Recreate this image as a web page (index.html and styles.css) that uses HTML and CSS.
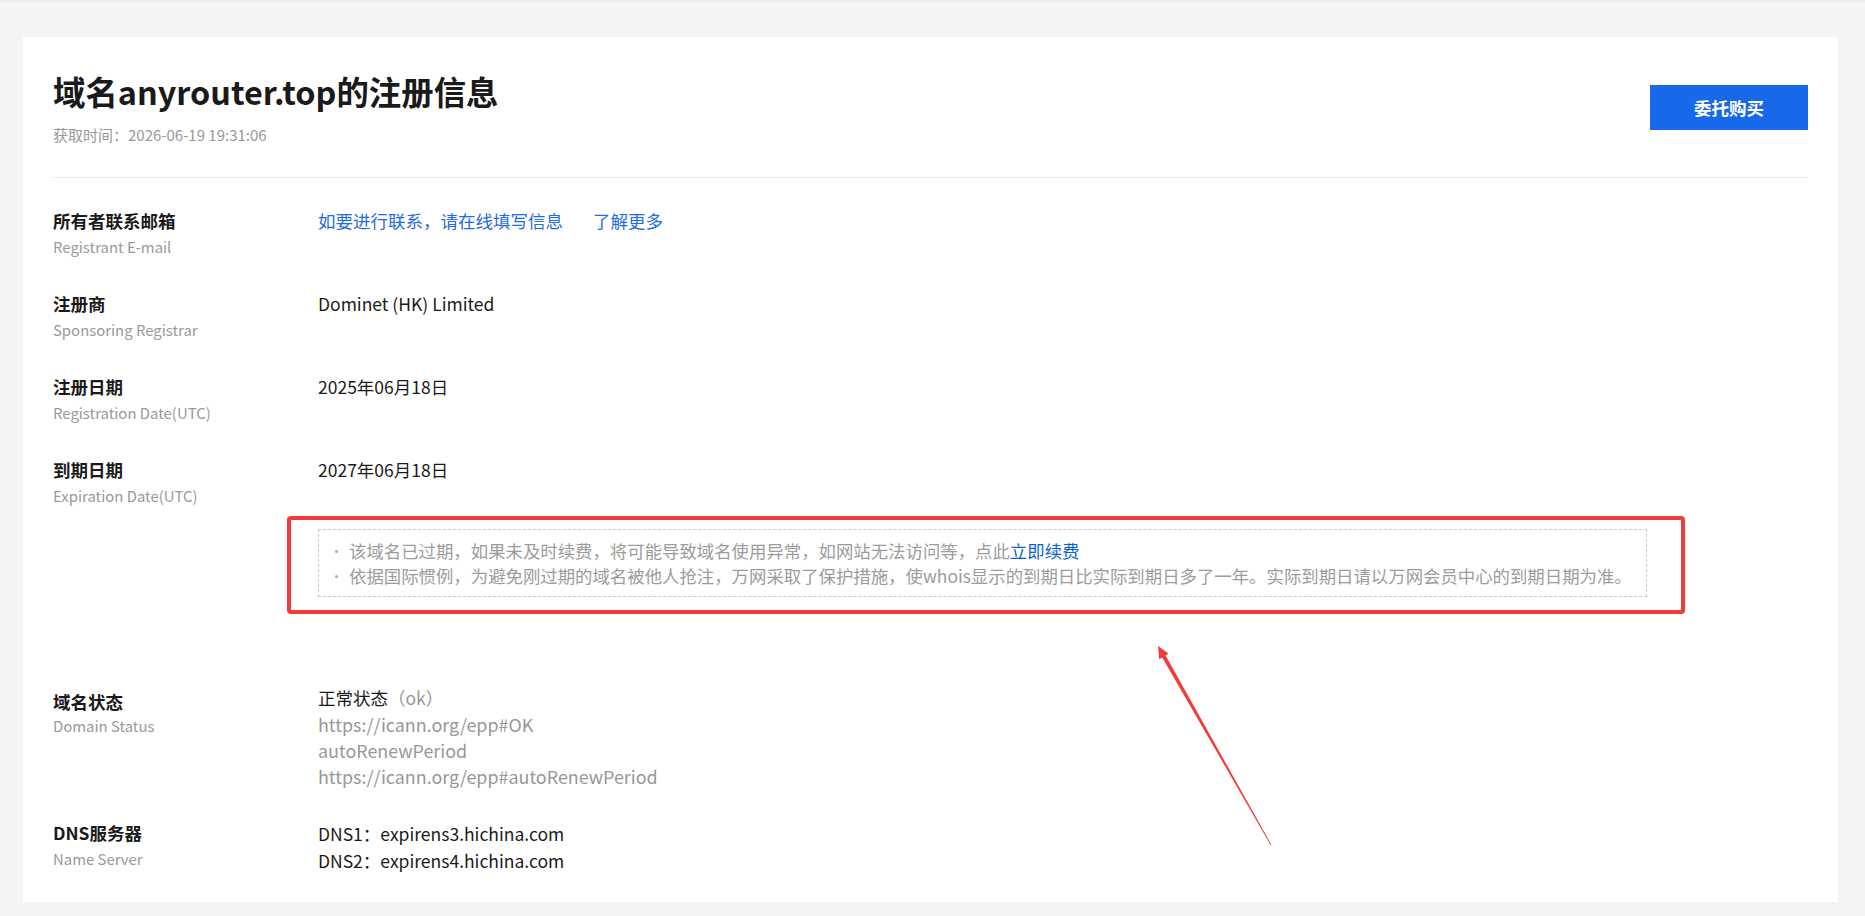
FILE: index.html
```html
<!DOCTYPE html>
<html lang="zh-CN">
<head>
  <meta charset="UTF-8">
  <meta name="viewport" content="width=device-width, initial-scale=1.0">
  <title>域名anyrouter.top的注册信息</title>
  <link rel="stylesheet" href="styles.css">
</head>
<body>
  <div class="whois-card">
    <!-- Header: title + fetch time + buy button -->
    <div class="whois-head">
      <div>
        <h1 class="whois-title">域名anyrouter.top的注册信息</h1>
        <p class="whois-time">获取时间：2026-06-19 19:31:06</p>
      </div>
      <a class="buy-button" href="#">委托购买</a>
    </div>

    <ul class="info-list">
      <li class="info-row">
        <div class="info-label"><strong>所有者联系邮箱</strong><span>Registrant E-mail</span></div>
        <div class="info-value">
          <a class="info-link" href="#">如要进行联系，请在线填写信息</a><a class="info-link more-link" href="#">了解更多</a>
        </div>
      </li>
      <li class="info-row">
        <div class="info-label"><strong>注册商</strong><span>Sponsoring Registrar</span></div>
        <div class="info-value">Dominet (HK) Limited</div>
      </li>
      <li class="info-row">
        <div class="info-label"><strong>注册日期</strong><span>Registration Date(UTC)</span></div>
        <div class="info-value">2025年06月18日</div>
      </li>
      <li class="info-row">
        <div class="info-label"><strong>到期日期</strong><span>Expiration Date(UTC)</span></div>
        <div class="info-value">
          <div>2027年06月18日</div>
          <div class="expire-tip">
            <ul class="tip-list">
              <li>该域名已过期，如果未及时续费，将可能导致域名使用异常，如网站无法访问等，点此<a class="renew-link" href="#">立即续费</a></li>
              <li>依据国际惯例，为避免刚过期的域名被他人抢注，万网采取了保护措施，使whois显示的到期日比实际到期日多了一年。实际到期日请以万网会员中心的到期日期为准。</li>
            </ul>
            <div class="mark-box"></div>
          </div>
        </div>
      </li>
      <li class="info-row status-row">
        <div class="info-label"><strong>域名状态</strong><span>Domain Status</span></div>
        <div class="info-value">
          <div>正常状态<span class="muted">（ok）</span></div>
          <div class="muted status-code">https://icann.org/epp#OK</div>
          <div class="muted status-code">autoRenewPeriod</div>
          <div class="muted status-code">https://icann.org/epp#autoRenewPeriod</div>
        </div>
      </li>
      <li class="info-row dns-row">
        <div class="info-label"><strong>DNS服务器</strong><span>Name Server</span></div>
        <div class="info-value">
          <div>DNS1：expirens3.hichina.com</div>
          <div>DNS2：expirens4.hichina.com</div>
        </div>
      </li>
    </ul>

    <!-- Red annotation arrow -->
    <svg class="mark-arrow" width="140" height="215" viewBox="0 0 140 215">
      <polygon points="15,9 25.5,16.5 22.6,18.4 128.4,207.8 127.7,208.2 19.2,20.4 16.2,22.2" fill="#f23b3b"/>
    </svg>
  </div>
</body>
</html>
```

FILE: styles.css
```css
/* General styles */
* {
  box-sizing: border-box;
}

body {
  margin: 0;
  padding: 37px 27px 16px 23px;
  background: linear-gradient(180deg, #ededef 0, #f8f8f9 5px, #f4f4f4 11px) no-repeat;
  background-color: #f4f4f4;
  font-family: "Noto Sans CJK SC", "Source Han Sans SC", sans-serif;
  color: #1a1a1a;
}

.whois-card {
  position: relative;
  background: #fff;
  padding: 0 30px 28px;
}

/* Header */
.whois-head {
  display: flex;
  justify-content: space-between;
  align-items: flex-start;
  padding: 34px 0 31px;
  border-bottom: 1px solid #e8e8e8;
}

.whois-title {
  margin: 0;
  font-size: 32.4px;
  line-height: 40px;
  font-weight: 700;
  color: #1a1a1a;
}

.whois-time {
  margin: 13px 0 0;
  font-size: 15px;
  line-height: 22px;
  color: #999;
}

.buy-button {
  margin-top: 14px;
  width: 158px;
  height: 45px;
  display: flex;
  align-items: center;
  justify-content: center;
  background: #1769e9;
  color: #fff;
  font-size: 17.5px;
  font-weight: 700;
  text-decoration: none;
}

/* Info rows */
.info-list {
  list-style: none;
  margin: 0;
  padding: 30px 0 0;
}

.info-row {
  display: flex;
  margin-bottom: 31px;
}

.info-row:last-child {
  margin-bottom: 0;
}

.info-label {
  width: 265px;
  flex-shrink: 0;
}

.info-label strong {
  display: block;
  font-size: 17.5px;
  line-height: 26px;
  font-weight: 700;
  color: #1a1a1a;
}

.info-label span {
  display: block;
  font-size: 14.9px;
  line-height: 26px;
  color: #999;
}

.status-row .info-label {
  padding-top: 4px;
}

.status-row .info-label span {
  line-height: 22px;
}

.dns-row .info-value {
  line-height: 27px;
}

.info-value {
  font-size: 17.5px;
  line-height: 26px;
  color: #1a1a1a;
}

.info-link {
  color: #1f6ae6;
  text-decoration: none;
}

.more-link {
  margin-left: 30px;
}

.muted {
  color: #979797;
}

.status-code {
  font-size: 17.9px;
}

/* Expire notice */
.expire-tip {
  position: relative;
  width: 1329px;
  margin: 46px 0 57px;
}

.tip-list {
  list-style: none;
  margin: 0;
  padding: 8px 10px 8px 15px;
  border: 1px dashed #c9c9c9;
  font-size: 17.4px;
  line-height: 25px;
  color: #9c9c9c;
  white-space: nowrap;
}

.tip-list li::before {
  content: "";
  display: inline-block;
  width: 3px;
  height: 3px;
  border-radius: 50%;
  background: #aaa;
  vertical-align: middle;
  margin: 0 11px 3px 1px;
}

.renew-link {
  color: #0b5fd6;
  text-decoration: none;
}

.mark-box {
  position: absolute;
  left: -31px;
  top: -13px;
  right: -38px;
  bottom: -17px;
  border: 4px solid #f23b3b;
  border-radius: 4px;
  pointer-events: none;
}

.mark-arrow {
  position: absolute;
  left: 1120px;
  top: 600px;
  pointer-events: none;
}
```
